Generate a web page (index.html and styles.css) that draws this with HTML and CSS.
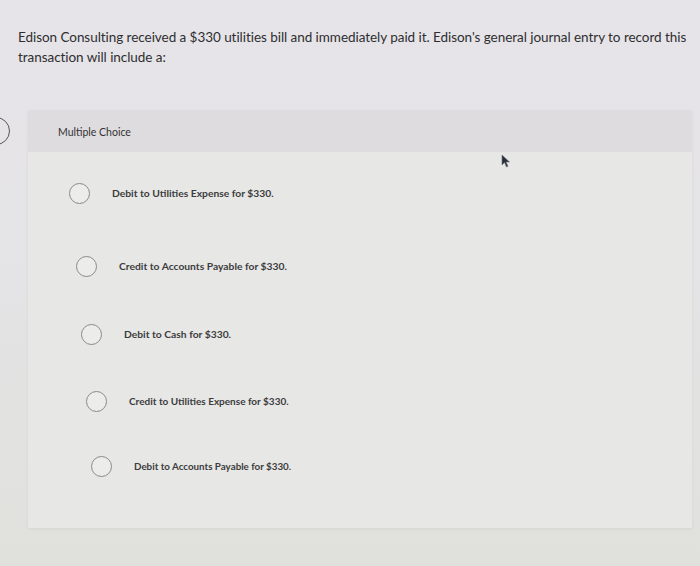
FILE: index.html
```html
<!DOCTYPE html>
<html lang="en">
<head>
  <meta charset="UTF-8">
  <meta name="viewport" content="width=device-width, initial-scale=1.0">
  <title>Multiple Choice</title>
  <link rel="stylesheet" href="styles.css">
</head>
<body>
  <div class="page">
    <p class="question">Edison Consulting received a $330 utilities bill and immediately paid it. Edison's general journal entry to record this transaction will include a:</p>

    <div class="nav-circle"></div>

    <div class="panel">
      <div class="panel-head">Multiple Choice</div>
      <ul class="choices">
        <li class="choice"><span class="radio"></span><span class="label">Debit to Utilities Expense for $330.</span></li>
        <li class="choice"><span class="radio"></span><span class="label">Credit to Accounts Payable for $330.</span></li>
        <li class="choice"><span class="radio"></span><span class="label">Debit to Cash for $330.</span></li>
        <li class="choice"><span class="radio"></span><span class="label">Credit to Utilities Expense for $330.</span></li>
        <li class="choice"><span class="radio"></span><span class="label">Debit to Accounts Payable for $330.</span></li>
      </ul>
    </div>

    <svg class="pointer" width="10" height="14" viewBox="0 0 10 14">
      <path d="M1 1 L1 11 L3.5 8.5 L5.5 13 L7 12.3 L5 8 L8.5 8 Z" fill="#2b2f3a" stroke="#6b6f78" stroke-width="0.6"/>
    </svg>
  </div>
</body>
</html>
```

FILE: styles.css
```css
* {
  box-sizing: border-box;
  margin: 0;
  padding: 0;
}

html, body {
  height: 100%;
  overflow: hidden;
}

body {
  font-family: Lato, "Open Sans", Arial, sans-serif;
  background: linear-gradient(180deg, #e6e4e8 0%, #e4e3e5 50%, #e0e1dc 100%);
  color: #333;
}

.page {
  position: relative;
  height: 100%;
  padding-top: 27px;
}

.question {
  padding: 0 8px 0 18px;
  font-size: 13.5px;
  line-height: 20px;
  color: #2e2e30;
  letter-spacing: -0.05px;
}

.nav-circle {
  position: absolute;
  left: -18px;
  top: 117px;
  width: 28px;
  height: 28px;
  border: 1.5px solid #555;
  border-radius: 50%;
}

.panel {
  margin: 43px 8px 0 28px;
  height: 418px;
  background: #e7e7e5;
  box-shadow: 0 1px 3px rgba(0, 0, 0, 0.06);
}

.panel-head {
  height: 42px;
  padding: 16px 0 0 30px;
  background: #dedcde;
  font-size: 10.5px;
  color: #333;
}

.choices {
  list-style: none;
  padding-top: 30px;
}

.choice {
  display: flex;
  align-items: center;
  height: 22px;
  padding-left: 41px;
}

.choice:nth-child(2) { padding-left: 48px; margin-top: 51px; }
.choice:nth-child(3) { padding-left: 53px; margin-top: 46px; }
.choice:nth-child(4) { padding-left: 58px; margin-top: 45px; }
.choice:nth-child(5) { padding-left: 63px; margin-top: 43px; }

.choice:nth-child(4) .label { font-size: 10px; }
.choice:nth-child(5) .label { font-size: 9.8px; }

.radio {
  width: 21px;
  height: 21px;
  border: 1.3px solid #8a8a8a;
  border-radius: 50%;
  background: #ececea;
  flex-shrink: 0;
}

.label {
  margin-left: 22px;
  font-size: 10.3px;
  font-weight: bold;
  color: #3c3c3e;
}

.pointer {
  position: absolute;
  left: 501px;
  top: 154px;
}
```
